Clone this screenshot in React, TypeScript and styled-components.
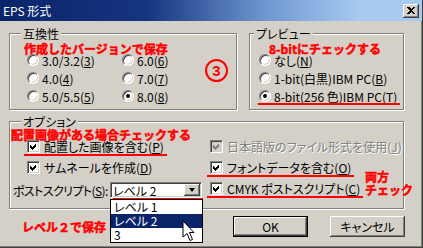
import styled, { createGlobalStyle } from "styled-components";

const GlobalStyle = createGlobalStyle`
  body {
    margin: 0;
    font-family: "Noto Sans CJK JP", "Noto Sans", sans-serif;
  }
`;

const Window = styled.div`
  position: relative;
  width: 423px;
  height: 248px;
  box-sizing: border-box;
  overflow: hidden;
  background: #d4d0c8;
  border-right: 1px solid #404040;
  border-bottom: 1px solid #404040;
  box-shadow: inset -1px -1px 0 #808080;
  color: #000;
  font-size: 12px;
  line-height: 13px;
  font-feature-settings: "palt";
`;

const TitleBar = styled.div`
  height: 21px;
  display: flex;
  align-items: center;
  justify-content: space-between;
  padding: 0 3px;
  background: linear-gradient(
    to right,
    #0a246a 0%,
    #163580 35%,
    #6d94cf 62%,
    #a6caf0 85%
  );
  color: #fff;
`;

const CloseButton = styled.span`
  width: 16px;
  height: 14px;
  box-sizing: border-box;
  display: flex;
  align-items: center;
  justify-content: center;
  background: #d4d0c8;
  box-shadow: inset -1px -1px 0 #404040, inset 1px 1px 0 #fff,
    inset -2px -2px 0 #808080;
`;

const Body = styled.div`
  display: flex;
  flex-direction: column;
  padding: 6px 0 0 9px;
`;

const TopRow = styled.div`
  display: flex;
  gap: 12px;
`;

const Group = styled.fieldset<{ $width: number; $pad: string; $gap?: number }>`
  position: relative;
  margin: ${(p) => p.$gap ?? 0}px 0 0;
  min-width: 0;
  width: ${(p) => p.$width}px;
  box-sizing: border-box;
  padding: ${(p) => p.$pad};
  border: 1px solid #808080;
  box-shadow: inset 1px 1px 0 #fff, 1px 1px 0 #fff;
`;

const Caption = styled.legend<{ $shift: number }>`
  margin-left: ${(p) => p.$shift}px;
  padding: 0 2px;
  line-height: 13px;
  background: #d4d0c8;
`;

const RadioGrid = styled.div<{ $cols: string }>`
  display: grid;
  grid-template-columns: ${(p) => p.$cols};
  grid-template-rows: repeat(3, 18px);
  grid-auto-flow: column;
`;

const Choice = styled.label<{ $mark?: boolean }>`
  position: relative;
  display: inline-flex;
  align-items: center;
  gap: 3px;
  height: 18px;
  justify-self: start;
  white-space: nowrap;

  &::after {
    content: "";
    display: ${(p) => (p.$mark ? "block" : "none")};
    position: absolute;
    left: -1px;
    right: -3px;
    bottom: 0;
    height: 2px;
    background: #f00;
  }
`;

const Radio = styled.span<{ $on?: boolean }>`
  position: relative;
  width: 12px;
  height: 12px;
  box-sizing: border-box;
  flex: none;
  border-radius: 50%;
  background: #fff;
  border: 1px solid;
  border-color: #808080 #fff #fff #808080;
  box-shadow: inset 1px 1px 0 #404040, inset -1px -1px 0 #d4d0c8;

  &::after {
    content: "";
    display: ${(p) => (p.$on ? "block" : "none")};
    position: absolute;
    left: 3px;
    top: 3px;
    width: 4px;
    height: 4px;
    border-radius: 50%;
    background: #000;
  }
`;

const OptionGrid = styled.div`
  display: grid;
  grid-template-columns: 197px auto;
  grid-template-rows: 13px 13px 16px;
  row-gap: 8px;
`;

const Check = styled.label<{ $mark?: boolean; $off?: boolean; $indent?: number }>`
  position: relative;
  display: inline-flex;
  align-items: center;
  gap: 4px;
  height: 13px;
  margin-left: ${(p) => p.$indent ?? 0}px;
  justify-self: start;
  white-space: nowrap;
  color: ${(p) => (p.$off ? "#808080" : "#000")};
  text-shadow: ${(p) => (p.$off ? "1px 1px 0 #fff" : "none")};

  &::after {
    content: "";
    display: ${(p) => (p.$mark ? "block" : "none")};
    position: absolute;
    left: -3px;
    right: -3px;
    bottom: -3px;
    height: 2px;
    background: #f00;
  }
`;

const Box = styled.span<{ $off?: boolean }>`
  width: 13px;
  height: 13px;
  box-sizing: border-box;
  flex: none;
  display: flex;
  align-items: center;
  justify-content: center;
  background: ${(p) => (p.$off ? "#d4d0c8" : "#fff")};
  border: 1px solid;
  border-color: #808080 #fff #fff #808080;
  box-shadow: inset 1px 1px 0 #404040, inset -1px -1px 0 #d4d0c8;
`;

const ComboRow = styled.div`
  display: grid;
  grid-template-columns: 97px 92px;
  align-items: center;
  white-space: nowrap;
`;

const ComboLabel = styled.span`
  letter-spacing: -0.6px;
`;

const Combo = styled.div`
  position: relative;
  height: 16px;
  box-sizing: border-box;
  display: flex;
  align-items: center;
  justify-content: space-between;
  padding-left: 2px;
  background: #fff;
  border: 1px solid;
  border-color: #808080 #fff #fff #808080;
  box-shadow: inset 1px 1px 0 #404040, inset -1px -1px 0 #d4d0c8;

  &::after {
    content: "";
    position: absolute;
    left: 2px;
    right: -2px;
    bottom: -3px;
    height: 2px;
    background: #f00;
  }
`;

const DropButton = styled.span`
  width: 16px;
  height: 12px;
  margin-right: 1px;
  box-sizing: border-box;
  display: flex;
  align-items: center;
  justify-content: center;
  background: #d4d0c8;
  box-shadow: inset -1px -1px 0 #404040, inset 1px 1px 0 #fff,
    inset -2px -2px 0 #808080;

  &::before {
    content: "";
    border-left: 3.5px solid transparent;
    border-right: 3.5px solid transparent;
    border-top: 4px solid #000;
  }
`;

const DropList = styled.ul`
  position: absolute;
  z-index: 2;
  left: -1px;
  top: 16px;
  width: 93px;
  box-sizing: border-box;
  margin: 0;
  padding: 0;
  list-style: none;
  background: #fff;
  border: 1px solid #000;
`;

const DropItem = styled.li<{ $active?: boolean }>`
  height: 14px;
  line-height: 14px;
  padding-left: 3px;
  background: ${(p) => (p.$active ? "#0a246a" : "#fff")};
  color: ${(p) => (p.$active ? "#fff" : "#000")};
`;

const Pointer = styled.svg`
  position: absolute;
  left: 71px;
  top: 20px;
`;

const BottomRow = styled.div`
  display: grid;
  grid-template-columns: 202px 75px 75px;
  column-gap: 22px;
  align-items: center;
  margin-top: 7px;
`;

const Button = styled.button<{ $primary?: boolean }>`
  height: 21px;
  box-sizing: border-box;
  padding: 0;
  font: inherit;
  font-size: 12px;
  color: #000;
  background: #d4d0c8;
  border: ${(p) => (p.$primary ? "1px solid #000" : "none")};
  box-shadow: inset -1px -1px 0 #404040, inset 1px 1px 0 #fff,
    inset -2px -2px 0 #808080;
`;

const Note = styled.span`
  position: absolute;
  color: #f00;
  font-weight: 700;
  font-size: 12px;
  line-height: 13px;
  white-space: nowrap;
  font-feature-settings: normal;
  -webkit-text-stroke: 0.5px #f00;
`;

const CompatNote = styled(Note)`
  left: 14px;
  top: 2px;
`;

const PreviewNote = styled(Note)`
  left: 19px;
  top: 2px;
`;

const OptionNote = styled(Note)`
  left: 1px;
  top: 0;
`;

const BothNote = styled(Note)`
  left: 355px;
  top: 42px;
`;

const SaveNote = styled.span`
  padding-left: 13px;
  color: #f00;
  font-weight: 700;
  white-space: nowrap;
  font-feature-settings: normal;
  -webkit-text-stroke: 0.5px #f00;
`;

const Step = styled.span`
  position: absolute;
  right: 8px;
  top: 19px;
  width: 23px;
  height: 23px;
  box-sizing: border-box;
  display: flex;
  align-items: center;
  justify-content: center;
  border: 2px solid #f00;
  border-radius: 50%;
  color: #f00;
  font-family: "Liberation Sans", sans-serif;
  font-weight: 700;
  font-size: 15px;
  line-height: 1;
`;

function Tick({ off }: { off?: boolean }) {
  return (
    <svg width="7" height="7" viewBox="0 0 7 7" shapeRendering="crispEdges">
      <path d="M0 2 L2 4 L6 0 L6 3 L2 7 L0 5 Z" fill={off ? "#808080" : "#000"} />
    </svg>
  );
}

const versions = [
  { text: "3.0/3.2", key: "3" },
  { text: "4.0", key: "4" },
  { text: "5.0/5.5", key: "5" },
  { text: "6.0", key: "6" },
  { text: "7.0", key: "7" },
  { text: "8.0", key: "8" },
];

const previews = [
  { text: "なし", key: "N" },
  { text: "1-bit(白黒)IBM PC", key: "B" },
  { text: "8-bit(256 色)IBM PC", key: "T" },
];

export default function App() {
  return (
    <Window>
      <GlobalStyle />
      <TitleBar>
        <span>EPS 形式</span>
        <CloseButton>
          <svg width="8" height="7" viewBox="0 0 8 7" shapeRendering="crispEdges">
            <path d="M0 0 L2 0 L4 2 L6 0 L8 0 L5 3.5 L8 7 L6 7 L4 5 L2 7 L0 7 L3 3.5 Z" fill="#000" />
          </svg>
        </CloseButton>
      </TitleBar>
      <Body>
        <TopRow>
          <Group $width={228} $pad="11px 0 4px 17px">
            <Caption $shift={-6}>互換性</Caption>
            <CompatNote>作成したバージョンで保存</CompatNote>
            <RadioGrid $cols="95px auto">
              {versions.map((v) => (
                <Choice key={v.key}>
                  <Radio $on={v.key === "8"} />
                  <span>
                    {v.text}(<u>{v.key}</u>)
                  </span>
                </Choice>
              ))}
            </RadioGrid>
            <Step>3</Step>
          </Group>
          <Group $width={155} $pad="11px 0 4px 9px">
            <Caption $shift={-5}>プレビュー</Caption>
            <PreviewNote>8-bitにチェックする</PreviewNote>
            <RadioGrid $cols="auto">
              {previews.map((v) => (
                <Choice key={v.key} $mark={v.key === "T"}>
                  <Radio $on={v.key === "T"} />
                  <span>
                    {v.text}(<u>{v.key}</u>)
                  </span>
                </Choice>
              ))}
            </RadioGrid>
          </Group>
        </TopRow>
        <Group $width={395} $pad="12px 0 10px 3px" $gap={5}>
          <Caption $shift={8}>オプション</Caption>
          <OptionNote>配置画像がある場合チェックする</OptionNote>
          <BothNote>
            両方
            <br />
            チェック
          </BothNote>
          <OptionGrid>
            <Check $mark $indent={14}>
              <Box>
                <Tick />
              </Box>
              <span>
                配置した画像を含む(<u>P</u>)
              </span>
            </Check>
            <Check $off>
              <Box $off>
                <Tick off />
              </Box>
              <span>
                日本語版のファイル形式を使用(<u>J</u>)
              </span>
            </Check>
            <Check $indent={14}>
              <Box>
                <Tick />
              </Box>
              <span>
                サムネールを作成(<u>D</u>)
              </span>
            </Check>
            <Check $mark>
              <Box>
                <Tick />
              </Box>
              <span>
                フォントデータを含む(<u>O</u>)
              </span>
            </Check>
            <ComboRow>
              <ComboLabel>
                ポストスクリプト(<u>S</u>):
              </ComboLabel>
              <Combo>
                <span>レベル 2</span>
                <DropButton />
                <DropList>
                  <DropItem>レベル 1</DropItem>
                  <DropItem $active>レベル 2</DropItem>
                  <DropItem>3</DropItem>
                  <Pointer width="13" height="22" viewBox="0 0 13 22">
                    <path
                      d="M1 1 L1 17 L5 13.5 L8 20.5 L10.5 19.5 L7.5 12.5 L12 12.5 Z"
                      fill="#fff"
                      stroke="#000"
                      strokeWidth="1"
                    />
                  </Pointer>
                </DropList>
              </Combo>
            </ComboRow>
            <Check $mark>
              <Box>
                <Tick />
              </Box>
              <span>
                CMYK ポストスクリプト(<u>C</u>)
              </span>
            </Check>
          </OptionGrid>
        </Group>
        <BottomRow>
          <SaveNote>レベル２で保存</SaveNote>
          <Button $primary>OK</Button>
          <Button>キャンセル</Button>
        </BottomRow>
      </Body>
    </Window>
  );
}
